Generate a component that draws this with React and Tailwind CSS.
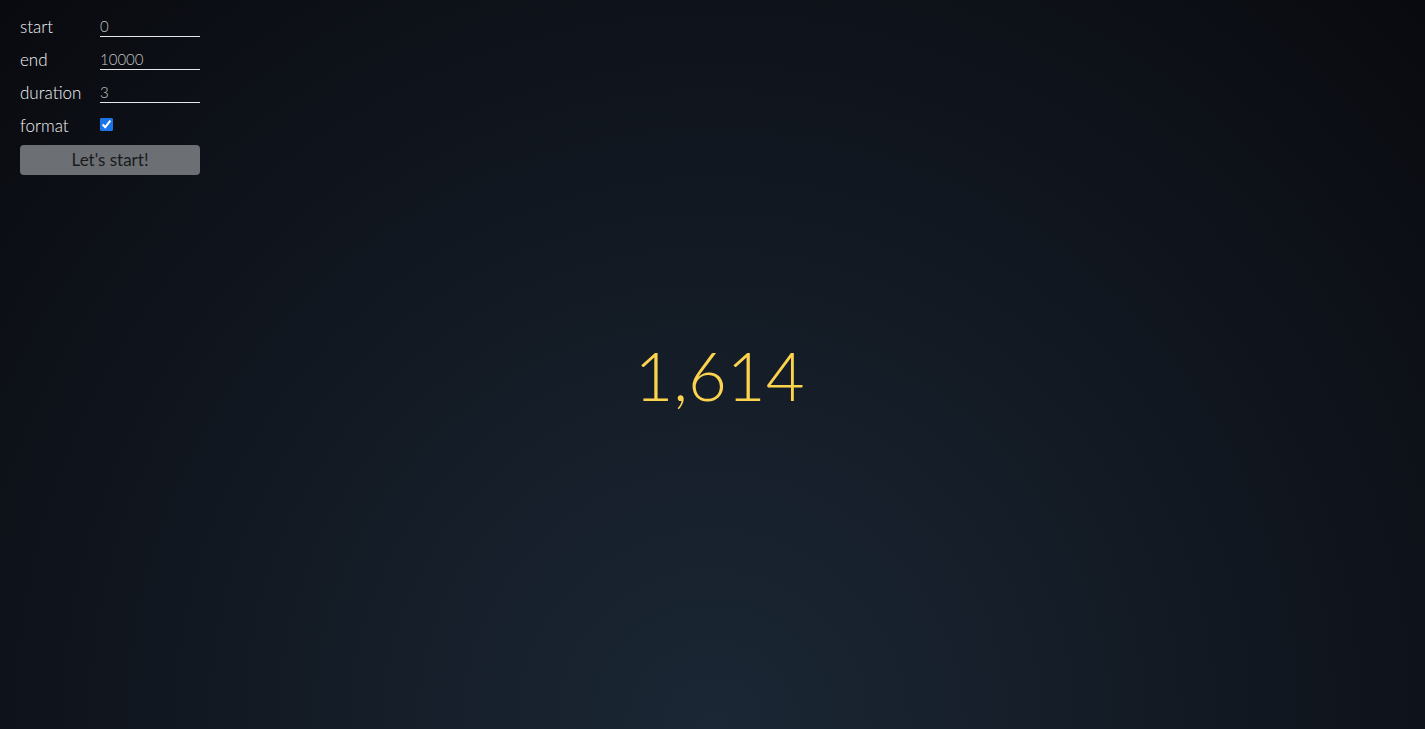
import React, { useState } from 'react';

const Field = ({ label, children }) => (
    <div className="flex items-center h-[33px]">
        <label className="w-[80px] text-[17px] font-light text-gray-100">{label}</label>
        {children}
    </div>
);

const App = () => {
    const [start, setStart] = useState('0');
    const [end, setEnd] = useState('10000');
    const [duration, setDuration] = useState('3');
    const [format, setFormat] = useState(true);

    return (
        <div
            className="relative min-h-screen w-full overflow-hidden bg-[radial-gradient(ellipse_at_bottom,_#1b2735_0%,_#090a0f_100%)]"
            style={{ fontFamily: 'Lato, "Open Sans", sans-serif' }}
        >
            {/* Controls */}
            <div className="absolute left-[20px] top-[10px] w-[180px]">
                <Field label="start">
                    <input
                        value={start}
                        onChange={(e) => setStart(e.target.value)}
                        className="w-[100px] bg-transparent border-b border-gray-200 text-[15px] font-light text-[#c4c4c4] leading-5 outline-none"
                    />
                </Field>
                <Field label="end">
                    <input
                        value={end}
                        onChange={(e) => setEnd(e.target.value)}
                        className="w-[100px] bg-transparent border-b border-gray-200 text-[15px] font-light text-[#c4c4c4] leading-5 outline-none"
                    />
                </Field>
                <Field label="duration">
                    <input
                        value={duration}
                        onChange={(e) => setDuration(e.target.value)}
                        className="w-[100px] bg-transparent border-b border-gray-200 text-[15px] font-light text-[#c4c4c4] leading-5 outline-none"
                    />
                </Field>
                <Field label="format">
                    <input
                        type="checkbox"
                        checked={format}
                        onChange={(e) => setFormat(e.target.checked)}
                        className="w-[13px] h-[13px] -mt-[2px] accent-[#1a73e8]"
                    />
                </Field>
                <button className="mt-[3px] w-[180px] h-[30px] rounded bg-[#6c6f74] text-[17px] text-[#1a1a1a]">
                    Let's start!
                </button>
            </div>

            {/* Counter */}
            <div className="flex min-h-screen items-center justify-center pt-[22px] pl-[14px]">
                <span className="text-[67px] font-light leading-none text-[#fcd34d]">1,614</span>
            </div>
        </div>
    );
};

export default App;
